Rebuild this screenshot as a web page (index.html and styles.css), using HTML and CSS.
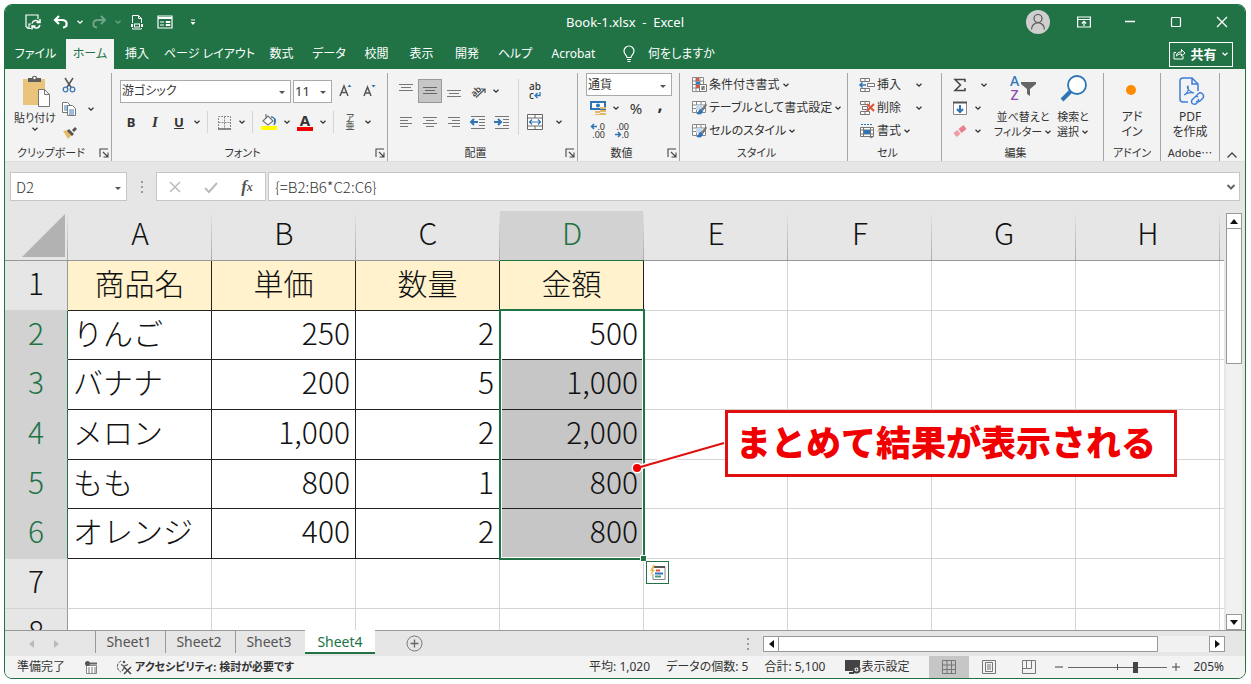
FILE: index.html
```html
<!DOCTYPE html>
<html lang="ja">
<head>
  <meta charset="UTF-8">
  <meta name="viewport" content="width=device-width, initial-scale=1">
  <title>Book-1.xlsx - Excel</title>
  <link rel="stylesheet" href="styles.css">
</head>
<body>

  <!-- 共通アイコン -->
  <svg class="defs" aria-hidden="true">
    <symbol id="chev" viewBox="0 0 8 8"><path d="M1.5 2.8 4 5.2 6.5 2.8" fill="none" stroke="currentColor" stroke-width="1.3"/></symbol>
    <symbol id="launch" viewBox="0 0 10 10"><path d="M1 9V1h8M4 4l4.500 4.500M9 4.500V9H4.500" fill="none" stroke="#444" stroke-width="1.1"/></symbol>
    <symbol id="tbl" viewBox="0 0 16 16"><path d="M1.500 1.500h13v11h-13zM1.500 5h13M1.500 8.500h13M5.500 1.500v11M10 1.500v11" fill="#fff" stroke="#888"/><path d="M5 5h6v5H5z" fill="#c5d9ee"/><path d="M15 3.500 10 9l2 2 4-6z" fill="#777"/><path d="M10 9c-3 0-2 4-5 4.500 3 2 7 1 7-2.500z" fill="#2f75b5"/></symbol>
  </svg>

  <div class="window">
    <header class="titlebar">
      <div class="quick">
        <button class="q" aria-label="上書き保存"><svg width="18" height="18" viewBox="0 0 18 18"><path d="M7 15.500H4l-2-2V2h12v4M5 15v-4h2" fill="none" stroke="#fff" stroke-width="1.200"/><path d="M8 10.500a4 4 0 0 1 7-1.500M16 6v3.500h-3.500M16 12a4 4 0 0 1-7 1.500M8 16.500V13h3.500" fill="none" stroke="#fff" stroke-width="1.500"/></svg></button>
        <button class="q" aria-label="元に戻す"><svg width="16" height="16" viewBox="0 0 16 16"><path d="M6 2 2 6l4 4M2.500 6H9c6 0 6 7 1 7.500" fill="none" stroke="#fff" stroke-width="2.200"/></svg></button>
        <button class="c" aria-label="元に戻す一覧"><svg width="8" height="8"><use href="#chev"/></svg></button>
        <button class="q faded" aria-label="やり直し"><svg width="16" height="16" viewBox="0 0 16 16"><path d="m10 2 4 4-4 4M13.500 6H7C1 6 1 13 6 13.500" fill="none" stroke="#fff" stroke-width="2"/></svg></button>
        <button class="c faded" aria-label="やり直し一覧"><svg width="8" height="8"><use href="#chev"/></svg></button>
        <button class="q" aria-label="印刷プレビュー"><svg width="16" height="16" viewBox="0 0 16 16"><path d="M3.500 9V1.500h6l3 3V9M9.500 1.500v3h3M3.500 14v1h9v-1" fill="none" stroke="#fff"/><path d="M2 11.500h2M12 11.500h2" stroke="#fff" stroke-width="3"/><rect x="5.500" y="10" width="5" height="3" fill="none" stroke="#fff"/></svg></button>
        <button class="q" aria-label="フォーム"><svg width="16" height="16" viewBox="0 0 16 16"><path d="M1 2h14v12H1z" fill="none" stroke="#fff" stroke-width="1.200"/><path d="M1 4h14" stroke="#fff" stroke-width="2"/><path d="M3 8h4M3 11h4M9 7.500h4v1H9zM9 10.500h4v1H9z" fill="none" stroke="#fff"/></svg></button>
        <button class="q" aria-label="カスタマイズ"><svg width="8" height="8" viewBox="0 0 8 8"><path d="M2 2h4" stroke="#fff"/><path d="M1.500 4h5L4 7z" fill="#fff"/></svg></button>
      </div>
      <div class="doc-title">Book-1.xlsx &nbsp;-&nbsp; Excel</div>
      <div class="window-buttons">
        <button class="avatar" aria-label="アカウント"><svg width="24" height="24" viewBox="0 0 24 24"><circle cx="12" cy="12" r="12" fill="#cfcfcf"/><circle cx="12" cy="8.500" r="4" fill="none" stroke="#555" stroke-width="1.200"/><path d="M5.500 19.500c0-9 13-9 13 0" fill="none" stroke="#555" stroke-width="1.200"/></svg></button>
        <button aria-label="リボンの表示オプション"><svg width="14" height="12" viewBox="0 0 14 12"><path d="M.600 1h12.800v10H.600zM.600 3.500h12.800M7 10V5.500M4.800 7.500 7 5.300l2.200 2.200" fill="none" stroke="#fff" stroke-width="1.200"/></svg></button>
        <button aria-label="最小化"><svg width="12" height="12"><path d="M1 5.500h10" stroke="#fff" stroke-width="1.300"/></svg></button>
        <button aria-label="最大化"><svg width="12" height="12"><rect x="1.500" y="1.500" width="9" height="9" rx="1" fill="none" stroke="#fff" stroke-width="1.200"/></svg></button>
        <button aria-label="閉じる"><svg width="12" height="12"><path d="m1 1 10 10M11 1 1 11" stroke="#fff" stroke-width="1.300"/></svg></button>
      </div>
    </header>

    <nav class="tabs">
      <div class="tab-list">
        <button>ファイル</button>
        <button class="active">ホーム</button>
        <button>挿入</button>
        <button>ページ レイアウト</button>
        <button>数式</button>
        <button>データ</button>
        <button>校閲</button>
        <button>表示</button>
        <button>開発</button>
        <button>ヘルプ</button>
        <button>Acrobat</button>
        <button class="tell"><svg width="14" height="18" viewBox="0 0 14 18"><path d="M5 12.500c0-2-3-3-3-6.500a5 5 0 0 1 10 0c0 3.500-3 4.500-3 6.500zM5 14.500h4M5.500 16.500h3" fill="none" stroke="#fff" stroke-width="1.200"/></svg>何をしますか</button>
      </div>
      <button class="share"><svg width="13" height="12" viewBox="0 0 13 12"><path d="M3 4.500H1v6.500h9V8M3.500 8c0-3 2-4 5-4V1.500L12 5 8.500 8V6C6 6 5 6.500 3.500 8z" fill="none" stroke="#fff"/></svg>共有<svg width="8" height="8"><use href="#chev"/></svg></button>
    </nav>

    <section class="ribbon">
      <div class="group clipboard">
        <div class="tools">
          <button class="big">
            <svg width="30" height="32" viewBox="0 0 30 32"><path d="M3 4h22v26H3z" fill="#ebc47c"/><path d="M8 3h4c0-3 5-3 5 0h4v4H8z" fill="#5d5d5d"/><circle cx="14.500" cy="3" r="1.200" fill="#fff"/><path d="M18.500 14.500h6l5 5v12h-11zM24.500 14.500v5h5" fill="#fff" stroke="#777"/></svg>
            貼り付け
            <svg width="8" height="8"><use href="#chev"/></svg>
          </button>
          <div class="rows">
            <button class="i" aria-label="切り取り"><svg width="14" height="16" viewBox="0 0 14 16"><path d="m3 1 6.500 10M11 1 4.500 11" stroke="#555" stroke-width="1.500"/><circle cx="3.500" cy="12.500" r="2.300" fill="none" stroke="#3e78b8" stroke-width="1.300"/><circle cx="10.500" cy="12.500" r="2.300" fill="none" stroke="#3e78b8" stroke-width="1.300"/></svg></button>
            <button class="i" aria-label="コピー"><svg width="16" height="16" viewBox="0 0 16 16"><path d="M1.500 1.500h5l3 3v7h-8z" fill="#fff" stroke="#777"/><path d="M3 5h4M3 7h3M3 9h3" stroke="#3e78b8"/><path d="M6.500 4.500h5l3 3v7h-8z" fill="#fff" stroke="#777"/><path d="M8 9h5M8 11h5M8 13h5" stroke="#3e78b8"/></svg></button>
            <button class="i" aria-label="書式のコピー"><svg width="15" height="14" viewBox="0 0 15 14"><path d="m1 5 5-1 4 5-4 4z" fill="#e8b865"/><path d="m7 3 5 5-2 2-5-5zM10 4l3-3 2 2-3 3z" fill="#555"/></svg></button>
          </div>
          <button class="c" aria-label="コピーの種類"><svg width="8" height="8"><use href="#chev"/></svg></button>
        </div>
        <div class="caption"><span>クリップボード</span><button aria-label="クリップボードの設定"><svg width="10" height="10"><use href="#launch"/></svg></button></div>
      </div>

      <div class="group font">
        <div class="tools two">
          <div class="line first">
            <span class="drop face"><select aria-label="フォント"><option>游ゴシック</option></select></span>
            <span class="drop size"><select aria-label="フォント サイズ"><option>11</option></select></span>
            <button class="i" aria-label="拡大"><svg width="14" height="16" viewBox="0 0 14 16"><path d="m1 13 4-10 4 10M2.500 9.500h5" fill="none" stroke="#555" stroke-width="1.500"/><path d="m8.500 4 2-2.500 2 2.500z" fill="#2f75b5"/></svg></button>
            <button class="i" aria-label="縮小"><svg width="14" height="16" viewBox="0 0 14 16"><path d="m1 13 3.500-9L8 13M2.500 10h4" fill="none" stroke="#555" stroke-width="1.500"/><path d="m8.500 2 2 2.500 2-2.500z" fill="#2f75b5"/></svg></button>
          </div>
          <div class="line">
            <button class="i b">B</button><button class="i it">I</button><button class="i u">U</button><button class="c" aria-label="下線の種類"><svg width="8" height="8"><use href="#chev"/></svg></button>
            <i class="bar"></i>
            <button class="i" aria-label="罫線"><svg width="15" height="15" viewBox="0 0 15 15"><path d="M1.500 14V1.500h12V14M7.500 1.500V14M1.500 7.500h12" fill="none" stroke="#888" stroke-dasharray="2 1"/><path d="M1 14h13" stroke="#666" stroke-width="1.500"/></svg></button><button class="c" aria-label="罫線の種類"><svg width="8" height="8"><use href="#chev"/></svg></button>
            <i class="bar"></i>
            <button class="i" aria-label="塗りつぶし"><svg width="18" height="18" viewBox="0 0 18 18"><path d="m3 8 5-5 5 5-5 4zM6 1v5" fill="#fff" stroke="#777" stroke-width="1.200"/><path d="M11 4c4 0 4 4 3 8 2-2 3-8-3-8z" fill="#2f75b5" stroke="#2f75b5"/><path d="M1 13h16v4H1z" fill="#ff0"/></svg></button><button class="c" aria-label="塗りつぶしの色"><svg width="8" height="8"><use href="#chev"/></svg></button>
            <button class="i color" aria-label="フォントの色">A</button><button class="c" aria-label="フォントの色一覧"><svg width="8" height="8"><use href="#chev"/></svg></button>
            <i class="bar"></i>
            <button class="i ruby"><span>ア</span><span>亜</span></button><button class="c" aria-label="ふりがな一覧"><svg width="8" height="8"><use href="#chev"/></svg></button>
          </div>
        </div>
        <div class="caption"><span>フォント</span><button aria-label="フォントの設定"><svg width="10" height="10"><use href="#launch"/></svg></button></div>
      </div>

      <div class="group align">
        <div class="tools">
          <div class="two">
            <div class="line">
              <button class="i" aria-label="上揃え"><svg width="16" height="16"><path d="M1 1.500h14M3 4.500h10M1 7.500h14" stroke="#777"/></svg></button>
              <button class="i on" aria-label="上下中央揃え"><svg width="16" height="16"><path d="M1 4.500h14M3 7.500h10M1 10.500h14" stroke="#666"/></svg></button>
              <button class="i" aria-label="下揃え"><svg width="16" height="16"><path d="M1 7.500h14M3 10.500h10M1 13.500h14" stroke="#777"/></svg></button>
              <button class="i" aria-label="方向"><svg width="17" height="16" viewBox="0 0 17 16"><text x="0" y="12" class="ab" transform="rotate(-45 5 8)">ab</text><path d="M6 14.500 15 6M11 6h4v4" fill="none" stroke="#555" stroke-width="1.200"/></svg></button><button class="c" aria-label="方向一覧"><svg width="8" height="8"><use href="#chev"/></svg></button>
            </div>
            <div class="line">
              <button class="i" aria-label="左揃え"><svg width="14" height="14"><path d="M1 2.500h12M1 5.500h8M1 8.500h12M1 11.500h8" stroke="#777"/></svg></button>
              <button class="i" aria-label="中央揃え"><svg width="14" height="14"><path d="M0 2.500h14M3 5.500h8M0 8.500h14M3 11.500h8" stroke="#777"/></svg></button>
              <button class="i" aria-label="右揃え"><svg width="14" height="14"><path d="M1 2.500h12M5 5.500h8M1 8.500h12M5 11.500h8" stroke="#777"/></svg></button>
              <button class="i" aria-label="インデントを減らす"><svg width="16" height="14"><path d="M1 1.500h14M9 4.500h6M9 7.500h6M9 10.500h6M1 13.500h14" stroke="#777"/><path d="M1 7h7M4 4 1 7l3 3" fill="none" stroke="#2f75b5" stroke-width="2"/></svg></button>
              <button class="i" aria-label="インデントを増やす"><svg width="16" height="14"><path d="M1 1.500h14M9 4.500h6M9 7.500h6M9 10.500h6M1 13.500h14" stroke="#777"/><path d="M0 7h7M4 4l3 3-3 3" fill="none" stroke="#2f75b5" stroke-width="2"/></svg></button>
            </div>
          </div>
          <i class="bar tall"></i>
          <div class="two">
            <div class="line"><button class="i wrap" aria-label="折り返して全体を表示"><span>ab</span><span>c<svg width="7" height="7" viewBox="0 0 7 7"><path d="M6 0v3.500H1M3.500 1 1 3.500 3.500 6" fill="none" stroke="#2f75b5" stroke-width="1.300"/></svg></span></button></div>
            <div class="line"><button class="i" aria-label="セルを結合して中央揃え"><svg width="16" height="16" viewBox="0 0 16 16"><path d="M.500.500h15v15H.500zM.500 4h15M.500 12h15M8 .500V4M8 12v3.500" fill="#fff" stroke="#666"/><path d="M2.500 8h11M5 5.500 2.500 8 5 10.500M11 5.500 13.500 8 11 10.500" fill="none" stroke="#2f75b5" stroke-width="1.200"/></svg></button><button class="c far" aria-label="結合一覧"><svg width="8" height="8"><use href="#chev"/></svg></button></div>
          </div>
        </div>
        <div class="caption"><span>配置</span><button aria-label="配置の設定"><svg width="10" height="10"><use href="#launch"/></svg></button></div>
      </div>

      <div class="group number">
        <div class="tools rows">
          <span class="drop format"><select aria-label="数値の書式"><option>通貨</option></select></span>
          <div class="line">
            <button class="i" aria-label="通貨表示形式"><svg width="17" height="16" viewBox="0 0 17 16"><path d="M1 2h14v7H1z" fill="#fff" stroke="#2f75b5" stroke-width="2"/><circle cx="8" cy="5.500" r="2" fill="#2f75b5"/><path d="M10 7h6v2h-6zM10 10h6v2h-6zM10 13h6v2h-6zM5 11h5v2H5zM5 14h5v1H5z" fill="#e6b765"/></svg></button><button class="c" aria-label="通貨一覧"><svg width="8" height="8"><use href="#chev"/></svg></button>
            <button class="i pct">%</button>
            <button class="i comma">,</button>
          </div>
          <div class="line">
            <button class="i dec" aria-label="小数点以下の表示桁数を増やす"><span><svg width="6" height="7" viewBox="0 0 6 7"><path d="M0 3.500h6M3 1 .500 3.500 3 6" fill="none" stroke="#2f75b5" stroke-width="1.500"/></svg>.0</span><span>.00</span></button>
            <button class="i dec" aria-label="小数点以下の表示桁数を減らす"><span>.00</span><span><svg width="6" height="7" viewBox="0 0 6 7"><path d="M0 3.500h6M3 1l2.500 2.500L3 6" fill="none" stroke="#2f75b5" stroke-width="1.500"/></svg>.0</span></button>
          </div>
        </div>
        <div class="caption"><span>数値</span><button aria-label="数値の設定"><svg width="10" height="10"><use href="#launch"/></svg></button></div>
      </div>

      <div class="group styles">
        <div class="tools rows">
          <button class="item"><svg width="16" height="16" viewBox="0 0 16 16"><path d="M1.500.500h11v14h-11zM1.500 4h11M1.500 7.500h11M1.500 11h11M5 .500v14M9 .500v14" fill="#fff" stroke="#888"/><path d="M5 1h3v3H5zM5 8h3v3H5z" fill="#e0533a"/><path d="M5 4.500h4v3H5z" fill="#3e78b8"/><path d="M8.500 7.500h7v7h-7z" fill="#fff" stroke="#777"/><path d="M10 10h4M10 12h4M13 9l-2 4" stroke="#555"/></svg>条件付き書式<svg class="v" width="8" height="8"><use href="#chev"/></svg></button>
          <button class="item"><svg width="16" height="16"><use href="#tbl"/></svg>テーブルとして書式設定<svg class="v" width="8" height="8"><use href="#chev"/></svg></button>
          <button class="item"><svg width="16" height="16"><use href="#tbl"/></svg>セルのスタイル<svg class="v" width="8" height="8"><use href="#chev"/></svg></button>
        </div>
        <div class="caption"><span>スタイル</span></div>
      </div>

      <div class="group cells">
        <div class="tools rows">
          <button class="item wide"><svg width="16" height="16" viewBox="0 0 16 16"><path d="M1.500 1.500h9v3h-9zM6 1.500v3M1.500 11.500h9v3h-9zM6 11.500v3M8.500 6.500h7v3h-7z" fill="#fff" stroke="#777"/><path d="M1 8h6M3.500 5.500 1 8l2.500 2.500" fill="none" stroke="#2f75b5" stroke-width="1.500"/></svg>挿入<svg class="v" width="8" height="8"><use href="#chev"/></svg></button>
          <button class="item wide"><svg width="16" height="16" viewBox="0 0 16 16"><path d="M1.500 1.500h9v3h-9zM6 1.500v3M3.500 6.500h5v3h-5zM1.500 11.500h9v3h-9zM6 11.500v3" fill="#fff" stroke="#777"/><path d="m8 4 7 7M15 4l-7 7" stroke="#e0533a" stroke-width="2"/></svg>削除<svg class="v" width="8" height="8"><use href="#chev"/></svg></button>
          <button class="item"><svg width="16" height="16" viewBox="0 0 16 16"><path d="M2 1.500h12" stroke="#2f75b5" stroke-dasharray="2 1"/><path d="M1.500 4.500h13v9h-13zM1.500 7h13M1.500 11h13M4.500 4.500v9M11.500 4.500v9" fill="#fff" stroke="#777"/><path d="M5 7h6v4H5z" fill="#2f75b5"/><path d="m10 13 2 2 3-2" fill="none" stroke="#777"/></svg>書式<svg class="v" width="8" height="8"><use href="#chev"/></svg></button>
        </div>
        <div class="caption"><span>セル</span></div>
      </div>

      <div class="group edit">
        <div class="tools">
          <div class="rows">
            <div class="line"><button class="i" aria-label="オート SUM"><svg width="14" height="14"><path d="M12 4V1.500H2L7.500 7 2 12.500h10V10" fill="none" stroke="#444" stroke-width="1.500"/></svg></button><button class="c far" aria-label="集計一覧"><svg width="8" height="8"><use href="#chev"/></svg></button></div>
            <div class="line"><button class="i" aria-label="フィル"><svg width="14" height="14"><path d="M.500 1.500h13v12H.500z" fill="#fff" stroke="#888"/><path d="M0 1.500h14" stroke="#555" stroke-width="2"/><path d="M7 4v7M4 8l3 3 3-3" fill="none" stroke="#2f75b5" stroke-width="2"/></svg></button><button class="c" aria-label="フィル一覧"><svg width="8" height="8"><use href="#chev"/></svg></button></div>
            <div class="line"><button class="i" aria-label="クリア"><svg width="14" height="14"><path d="m5.500 5 5-4 3 4-5 4z" fill="#e8818f"/><path d="m4.500 6 3 4-4 3-3-4z" fill="#ef9aa5"/></svg></button><button class="c" aria-label="クリア一覧"><svg width="8" height="8"><use href="#chev"/></svg></button></div>
          </div>
          <button class="big sort">
            <span class="pic"><span class="az"><span class="a">A</span><span class="z">Z</span></span><svg width="15" height="18" viewBox="0 0 15 18"><path d="M0 3h15v2l-6 5v7l-3-2v-5L0 5z" fill="#666"/></svg></span>
            並べ替えと<span>フィルター<svg width="8" height="8"><use href="#chev"/></svg></span>
          </button>
          <button class="big find">
            <svg width="30" height="30" viewBox="0 0 30 30"><circle cx="19" cy="12" r="9" fill="#fff" stroke="#2e75b6" stroke-width="1.800"/><path d="m13 18-9 9" stroke="#2e75b6" stroke-width="4"/></svg>
            検索と<span>選択<svg width="8" height="8"><use href="#chev"/></svg></span>
          </button>
        </div>
        <div class="caption"><span>編集</span></div>
      </div>

      <div class="group addin">
        <div class="tools"><button class="big"><svg width="30" height="30"><circle cx="14" cy="17" r="5" fill="#ff8c00"/></svg>アド<span>イン</span></button></div>
        <div class="caption"><span>アドイン</span></div>
      </div>

      <div class="group adobe">
        <div class="tools"><button class="big"><svg width="30" height="30" viewBox="0 0 30 30"><path d="M13 29H8c-2 0-3-1-3-3V8c0-2 1-3 3-3h9l6 6v7M17 5v6h6" fill="none" stroke="#3e7ddb" stroke-width="1.500"/><path d="M9 22c4-2 5-6 4-9-2 1 1 6 6 7-4-1-7 0-10 2z" fill="none" stroke="#3e7ddb" stroke-width="1.200"/><path d="m21 23 2-2c3-3 7 1 5 4l-3 3c-1 1-3 1-4 0M23 26c1 1 0 3-1 4-3 3-7 0-5-3l3-3c1-1 2-1 3 0" fill="none" stroke="#3e7ddb" stroke-width="1.400"/></svg>PDF<span>を作成</span></button></div>
        <div class="caption"><span>Adobe⋯</span></div>
      </div>
      <button class="collapse" aria-label="リボンを折りたたむ"><svg width="12" height="8"><path d="M1.500 6.500 6 2l4.500 4.500" fill="none" stroke="#444" stroke-width="1.300"/></svg></button>
    </section>

    <section class="formula-bar">
      <span class="drop name"><input type="text" value="D2" aria-label="名前ボックス"></span>
      <svg class="grip" width="4" height="14"><path d="M2 1v12" stroke="#999" stroke-width="2" stroke-dasharray="2 3"/></svg>
      <div class="fx">
        <button aria-label="キャンセル"><svg width="14" height="14"><path d="m2 2 10 10M12 2 2 12" stroke="#bbb" stroke-width="1.500"/></svg></button>
        <button aria-label="入力"><svg width="14" height="14"><path d="m1 8 4 4 8-9" fill="none" stroke="#bbb" stroke-width="2"/></svg></button>
        <button class="fn"><span>f</span><small>x</small></button>
      </div>
      <div class="formula"><input type="text" value="{=B2:B6*C2:C6}" aria-label="数式バー"><svg width="10" height="8"><path d="m1.500 2 3.500 3.500L8.500 2" fill="none" stroke="#666" stroke-width="2"/></svg></div>
    </section>

    <main class="sheet-area">
      <div class="pane">
        <table class="grid">
          <colgroup><col class="row-head"><col span="9"></colgroup>
          <thead>
            <tr><th class="corner"><svg width="43" height="43" viewBox="0 0 43 43"><path d="M43 0v43H0z" fill="#b2b2b2"/></svg></th><th>A</th><th>B</th><th>C</th><th class="sel">D</th><th>E</th><th>F</th><th>G</th><th>H</th><th></th></tr>
          </thead>
          <tbody>
            <tr class="heads"><th>1</th><td>商品名</td><td>単価</td><td>数量</td><td>金額</td><td></td><td></td><td></td><td></td><td></td></tr>
            <tr class="data short"><th>2</th><td>りんご</td><td>250</td><td>2</td><td>500</td><td></td><td></td><td></td><td></td><td></td></tr>
            <tr class="data picked"><th>3</th><td>バナナ</td><td>200</td><td>5</td><td>1,000</td><td></td><td></td><td></td><td></td><td></td></tr>
            <tr class="data picked"><th>4</th><td>メロン</td><td>1,000</td><td>2</td><td>2,000</td><td></td><td></td><td></td><td></td><td></td></tr>
            <tr class="data picked short"><th>5</th><td>もも</td><td>800</td><td>1</td><td>800</td><td></td><td></td><td></td><td></td><td></td></tr>
            <tr class="data picked"><th>6</th><td>オレンジ</td><td>400</td><td>2</td><td>800</td><td></td><td></td><td></td><td></td><td></td></tr>
            <tr><th>7</th><td></td><td></td><td></td><td></td><td></td><td></td><td></td><td></td><td></td></tr>
            <tr><th>8</th><td></td><td></td><td></td><td></td><td></td><td></td><td></td><td></td><td></td></tr>
          </tbody>
        </table>
        <div class="selection"></div>
        <button class="analysis" aria-label="クイック分析"><svg width="16" height="16" viewBox="0 0 16 16"><path d="M4 1.500h11v13H3V9" fill="#fff" stroke="#888"/><path d="M4 2h11" stroke="#555" stroke-width="2"/><path d="M6 5.500h4" stroke="#e0533a" stroke-width="2"/><path d="M5 8.500h8" stroke="#2f75b5" stroke-width="2"/><path d="M5 11.500h6" stroke="#4a9b7a" stroke-width="2"/><path d="M3 0 0 6h2L0 11l5-6H3l2-5z" fill="#f0b450"/></svg></button>
        <svg class="pointer" width="96" height="36" viewBox="0 0 96 36"><path d="M6 30 93 5" stroke="#fff" stroke-width="5"/><circle cx="6" cy="30" r="5.500" fill="#fff"/><path d="M6 30 93 5" stroke="#e01010" stroke-width="2"/><circle cx="6" cy="30" r="4" fill="#f00000"/></svg>
        <div class="callout">まとめて結果が表示される</div>
      </div>
      <div class="v-scroll">
        <button aria-label="上へ"><svg width="8" height="5"><path d="M0 5h8L4 0z" fill="#111"/></svg></button>
        <div class="thumb"></div>
        <div class="track"></div>
        <button aria-label="下へ"><svg width="8" height="5"><path d="M0 0h8L4 5z" fill="#111"/></svg></button>
      </div>
    </main>

    <section class="sheet-bar">
      <div class="sheet-nav">
        <button aria-label="前のシート"><svg width="5" height="8"><path d="M5 0v8L0 4z" fill="#bbb"/></svg></button>
        <button aria-label="次のシート"><svg width="5" height="8"><path d="M0 0v8l5-4z" fill="#bbb"/></svg></button>
      </div>
      <div class="sheet-tabs">
        <button>Sheet1</button><button>Sheet2</button><button>Sheet3</button><button class="active">Sheet4</button>
      </div>
      <button class="add" aria-label="新しいシート"><svg width="17" height="17"><circle cx="8.500" cy="8.500" r="7.500" fill="none" stroke="#777"/><path d="M4.500 8.500h8M8.500 4.500v8" stroke="#666" stroke-width="1.300"/></svg></button>
      <svg class="grip" width="4" height="14"><path d="M2 1v12" stroke="#999" stroke-width="2" stroke-dasharray="2 3"/></svg>
      <div class="h-scroll">
        <button aria-label="左へ"><svg width="5" height="8"><path d="M5 0v8L0 4z" fill="#111"/></svg></button>
        <div class="thumb"></div>
        <div class="track"></div>
        <button aria-label="右へ"><svg width="5" height="8"><path d="M0 0v8l5-4z" fill="#111"/></svg></button>
      </div>
    </section>

    <footer class="status">
      <span class="ready">準備完了</span>
      <svg width="13" height="13" viewBox="0 0 13 13"><path d="M1.500 4.500h10v8h-10z" fill="#fff" stroke="#888"/><path d="M5 2.500h7" stroke="#666" stroke-width="2"/><path d="M3 7h8M3 9h8M3 11h8" stroke="#777" stroke-dasharray="2 1"/><circle cx="2.500" cy="2.500" r="2.500" fill="#555"/></svg>
      <button class="access"><svg width="17" height="16" viewBox="0 0 17 16"><path d="M5 2a6 6 0 0 0 0 11" fill="none" stroke="#555" stroke-dasharray="3 1"/><circle cx="8" cy="3" r="1.300" fill="#555"/><path d="M5 5.500 8 7l4-1.500M8 7v2l-2 3" fill="none" stroke="#555" stroke-width="1.200"/><path d="m8 8 7 7M15 8l-7 7" stroke="#444" stroke-width="1.500"/></svg>アクセシビリティ: 検討が必要です</button>
      <div class="sums"><span>平均: 1,020</span><span>データの個数: 5</span><span>合計: 5,100</span></div>
      <button class="display"><svg width="16" height="14" viewBox="0 0 16 14"><path d="M0 0h15v6l-8 5H0zM4 12h5v2H4z" fill="#444"/><circle cx="11.500" cy="9.500" r="3" fill="#fff" stroke="#444" stroke-width="2"/><circle cx="11.500" cy="9.500" r="1" fill="#444"/></svg>表示設定</button>
      <div class="views">
        <button class="on" aria-label="標準"><svg width="14" height="14"><path d="M.500.500h13v13H.500zM.500 5h13M.500 9.500h13M5 .500v13M9.500.500v13" fill="none" stroke="#777"/></svg></button>
        <button aria-label="ページ レイアウト表示"><svg width="14" height="14"><path d="M.500.500h13v13H.500zM3.500 2.500h7v9h-7zM5 5h4M5 7h4M5 9h4" fill="none" stroke="#777"/></svg></button>
        <button aria-label="改ページ プレビュー"><svg width="14" height="14"><path d="M.500.500h13v13H.500zM4.500.500v8h5v-8M.500 8.500h4" fill="none" stroke="#777"/></svg></button>
      </div>
      <div class="zoom">
        <button aria-label="縮小表示"><svg width="8" height="8"><path d="M0 4h8" stroke="#444"/></svg></button>
        <input type="range" min="0" max="100" value="69" aria-label="ズーム">
        <button aria-label="拡大表示"><svg width="8" height="8"><path d="M0 4h8M4 0v8" stroke="#444"/></svg></button>
        <span>205%</span>
      </div>
    </footer>
  </div>

</body>
</html>
```
FILE: styles.css
```css
* {
  box-sizing: border-box;
}

body {
  margin: 0;
  padding: 4px 5px 5px 4px;
  background: #fff;
  color: #333;
  font-family: "Noto Sans", "Noto Sans CJK JP", sans-serif;
  font-size: 12px;
  line-height: 16px;
  font-feature-settings: "palt";
}

button,
input,
select {
  margin: 0;
  padding: 0;
  border: none;
  background: none;
  color: inherit;
  font: inherit;
  font-feature-settings: inherit;
}

button {
  display: flex;
  align-items: center;
  justify-content: center;
  white-space: nowrap;
}

svg {
  display: block;
  flex: none;
  overflow: visible;
}

.defs {
  position: absolute;
  width: 0;
  height: 0;
  overflow: hidden;
}

.window {
  display: flex;
  flex-direction: column;
  height: calc(100vh - 9px);
  border: 1px solid #217346;
  border-radius: 8px;
  overflow: hidden;
  background: #e6e6e6;
}

/* タイトルバー */
.titlebar {
  display: grid;
  grid-template-columns: 1fr auto 1fr;
  align-items: center;
  height: 34px;
  background: #217346;
  color: #fff;
}

.doc-title {
  font-size: 13px;
}

.quick {
  display: flex;
  align-items: center;
  padding-left: 14px;
}

.quick .q {
  width: 28px;
  height: 28px;
}

.quick .c {
  width: 10px;
}

.faded {
  opacity: .35;
}

.window-buttons {
  display: flex;
  justify-content: flex-end;
}

.window-buttons button {
  width: 46px;
  height: 32px;
}

/* タブ */
.tabs {
  display: flex;
  justify-content: space-between;
  align-items: center;
  height: 30px;
  padding-right: 12px;
  background: #217346;
  color: #fff;
}

.tab-list {
  display: grid;
  grid-template-columns: 61px 48px 46px 99px 45px 50px 45px 45px 46px 50px 67px auto;
  height: 30px;
}

.tab-list .active {
  background: #f3f3f3;
  color: #217346;
}

.tab-list .tell {
  gap: 12px;
  padding-left: 15px;
}

.share {
  gap: 4px;
  width: 64px;
  height: 25px;
  border: 1px solid #fff;
  font-size: 13px;
  font-weight: bold;
}

/* リボン */
.ribbon {
  display: flex;
  height: 93px;
  background: #f3f3f3;
  border-bottom: 1px solid #ddd;
}

.group {
  display: flex;
  flex-direction: column;
  flex: none;
  margin-top: 4px;
  border-right: 1px solid #a6a6a6;
}

.clipboard { width: 107px; }
.font { width: 276px; }
.align { width: 190px; }
.number { width: 102px; }
.styles { width: 168px; }
.cells { width: 94px; }
.edit { width: 162px; }
.addin { width: 57px; }
.adobe { width: 59px; }

.tools {
  display: flex;
  height: 72px;
}

.rows {
  display: flex;
  flex-direction: column;
}

.rows > * {
  height: 23px;
}

.two {
  display: flex;
  flex-direction: column;
  gap: 7px;
  padding-top: 6px;
}

.line {
  display: flex;
  align-items: center;
}

.two .line {
  height: 24px;
}

.i {
  width: 24px;
  height: 24px;
  flex: none;
}

.c {
  width: 12px;
  flex: none;
}

.far {
  margin-left: 6px;
}

.bar {
  width: 1px;
  height: 22px;
  margin: 0 4px;
  background: #d5d5d5;
}

.tall {
  height: 56px;
  margin: 6px 4px 0;
}

.caption {
  display: grid;
  grid-template-columns: 0 1fr 14px;
  align-items: center;
  height: 16px;
  font-size: 11px;
  white-space: nowrap;
}

.caption span {
  grid-column: 2;
  text-align: center;
}

.addin .caption,
.adobe .caption {
  display: block;
  text-align: center;
}

.big {
  flex-direction: column;
  justify-content: flex-start;
  line-height: 15px;
}

.big > svg:first-child,
.pic {
  margin-bottom: 6px;
}

.big span {
  display: flex;
  align-items: center;
  gap: 2px;
}

.clipboard .tools {
  padding-left: 8px;
}

.clipboard .big {
  width: 44px;
  padding-top: 2px;
  font-size: 11px;
}

.clipboard .big > svg:first-child {
  margin-bottom: 3px;
}

.clipboard .c {
  align-self: center;
  margin-left: 4px;
}

.font .tools {
  padding-left: 7px;
}

.first {
  padding-left: 1px;
}

.first .drop {
  margin-right: 2px;
}

.drop {
  position: relative;
  display: block;
  border: 1px solid #aaa;
  background: #fff;
}

.drop::after {
  content: "";
  position: absolute;
  right: 5px;
  top: 50%;
  border: 3px solid transparent;
  border-top-color: #555;
  border-bottom: none;
}

.drop select,
.drop input {
  display: block;
  width: 100%;
  height: 100%;
  padding-left: 1px;
  appearance: none;
  outline: none;
}

.face {
  width: 171px;
  height: 23px;
}

.size {
  width: 39px;
  height: 23px;
}

.size select {
  font-size: 13px;
}

.b {
  font-size: 13px;
  font-weight: bold;
}

.it {
  font-family: "Liberation Serif", serif;
  font-size: 15px;
  font-style: italic;
  font-weight: bold;
}

.u {
  font-size: 13px;
  font-weight: bold;
  text-decoration: underline;
}

.i.color {
  width: 16px;
  height: 18px;
  margin: 0 4px;
  border-bottom: 4px solid #f00000;
  font-size: 15px;
  font-weight: bold;
}

.ruby {
  flex-direction: column;
  font-size: 9px;
  line-height: 8px;
}

.align .tools {
  padding-left: 6px;
}

.on {
  background: #c6c6c6;
}

.align .on {
  border: 1px solid #999;
}

.ab {
  font-size: 9px;
  font-weight: 600;
  fill: #444;
}

.wrap {
  flex-direction: column;
  font-size: 10px;
  font-weight: 500;
  line-height: 9px;
}

.dec {
  flex-direction: column;
  align-items: flex-end;
  padding-right: 5px;
  font-size: 9px;
  line-height: 8px;
}

.wrap span,
.dec span {
  display: flex;
  align-items: center;
}

.number .tools {
  padding-left: 8px;
}

.format {
  width: 86px;
  flex: none;
}

.pct {
  margin-left: 2px;
  font-size: 15px;
}

.comma {
  padding-bottom: 8px;
  font-size: 18px;
  font-weight: bold;
}

.styles .tools,
.cells .tools {
  padding-left: 11px;
}

.item {
  justify-content: flex-start;
  gap: 2px;
}

.wide .v {
  margin-left: 12px;
}

.edit .tools {
  padding-left: 6px;
}

.edit .big {
  width: 50px;
  font-size: 11px;
}

.edit .rows {
  width: 50px;
}

.addin .big,
.adobe .big {
  width: 100%;
}

.pic {
  height: 30px;
}

.az {
  flex-direction: column;
  font-size: 14px;
  font-weight: 500;
  line-height: 14px;
}

.big .az {
  gap: 0;
}

.a {
  color: #2e75b6;
}

.z {
  color: #8e4bb0;
}

.collapse {
  align-self: flex-end;
  width: 24px;
  height: 12px;
}

/* 数式バー */
.formula-bar {
  display: flex;
  align-items: center;
  height: 49px;
  padding: 0 5px;
  font-family: "Noto Sans CJK JP", sans-serif;
  font-size: 15px;
  font-weight: 300;
}

.name {
  width: 117px;
  height: 29px;
  border-color: #c6c6c6;
}

.name input {
  padding-left: 5px;
}

.formula-bar .grip {
  margin: 0 12px 0 13px;
}

.fx {
  display: flex;
  justify-content: space-around;
  width: 110px;
  height: 29px;
  margin-right: 2px;
  border: 1px solid #c6c6c6;
  background: #fff;
}

.fx button {
  width: 30px;
}

.fn {
  color: #555;
  font-family: "Liberation Serif", serif;
  font-size: 17px;
  font-style: italic;
  font-weight: bold;
}

.fn small {
  font-size: 12px;
}

.formula {
  display: flex;
  align-items: center;
  flex: 1;
  height: 29px;
  padding: 0 3px 0 6px;
  border: 1px solid #c6c6c6;
  background: #fff;
}

.formula input {
  flex: 1;
  outline: none;
}

/* シート */
.sheet-area {
  display: flex;
  flex: 1;
  min-height: 0;
}

.pane {
  position: relative;
  flex: 1;
  min-width: 0;
  overflow: hidden;
  font-family: "Noto Sans CJK JP", sans-serif;
  font-size: 30px;
  font-weight: 300;
  font-feature-settings: normal;
  line-height: 40px;
  color: #111;
}

.grid {
  width: 1359px;
  table-layout: fixed;
  border-collapse: separate;
  border-spacing: 0;
}

.grid col {
  width: 144px;
}

.grid .row-head {
  width: 63px;
}

.grid tr {
  height: 50px;
}

.grid .short {
  height: 49px;
}

.grid th,
.grid td {
  padding: 0 5px 7px;
  border-right: 1px solid #d4d4d4;
  border-bottom: 1px solid #d4d4d4;
  font-weight: 300;
  white-space: nowrap;
}

.grid td {
  background: #fff;
}

.grid th {
  background: #e6e6e6;
}

.grid thead th {
  border-right: none;
  border-bottom-color: #999;
  background: linear-gradient(#e6e6e6, #aaa) right / 1px 100% no-repeat #e6e6e6;
}

.grid thead .sel {
  background-color: #d2d2d2;
  border-bottom-color: #217346;
  color: #217346;
}

.grid .corner {
  padding: 0 3px 3px 0;
  vertical-align: bottom;
}

.corner svg {
  margin-left: auto;
}

.grid tbody th {
  border-right-color: #999;
}

.grid .data th {
  background: #d2d2d2;
  border-right: 1px solid #217346;
  color: #217346;
}

.heads td:nth-child(-n+5),
.data td:nth-child(-n+5) {
  border-color: #222;
}

.heads td:nth-child(-n+5) {
  background: #fff2cc;
  text-align: center;
}

.data td:nth-child(n+3) {
  text-align: right;
}

.picked td:nth-child(5) {
  background: #c6c6c6;
}

.selection {
  position: absolute;
  left: 494px;
  top: 98px;
  width: 146px;
  height: 251px;
  border: 2px solid #217346;
  box-shadow: inset 0 0 0 1px #fff;
}

.selection::after {
  content: "";
  position: absolute;
  right: -3px;
  bottom: -3px;
  width: 5px;
  height: 5px;
  background: #217346;
  outline: 1px solid #fff;
}

.analysis {
  position: absolute;
  left: 641px;
  top: 350px;
  width: 23px;
  height: 23px;
  border: 1px solid #217346;
  background: #fff;
}

.pointer {
  position: absolute;
  left: 626px;
  top: 227px;
}

.callout {
  position: absolute;
  left: 720px;
  top: 199px;
  width: 452px;
  padding: 8px 8px 13px;
  border: 3px solid #e01010;
  background: #fff;
  color: #f00000;
  font-size: 35px;
  font-weight: 900;
  white-space: nowrap;
}

.v-scroll {
  display: flex;
  flex-direction: column;
  width: 21px;
  padding: 2px 3px 0 2px;
}

.v-scroll button,
.h-scroll button {
  width: 16px;
  height: 16px;
  flex: none;
  border: 1px solid #999;
  background: #fff;
}

.thumb {
  border: 1px solid #999;
  background: #fff;
}

.track {
  flex: 1;
  background: #f1f1f1;
}

.v-scroll .thumb {
  height: 135px;
  border-top: none;
}

/* シート見出し */
.sheet-bar {
  display: flex;
  align-items: center;
  height: 26px;
  border-top: 1px solid #999;
  font-size: 14px;
}

.sheet-nav {
  display: flex;
  gap: 20px;
  width: 90px;
  padding-left: 24px;
}

.sheet-tabs {
  display: flex;
  align-self: flex-start;
}

.sheet-tabs button {
  width: 70px;
  height: 22px;
  padding-right: 3px;
  border-left: 1px solid #999;
  color: #555;
}

.sheet-tabs .active {
  height: 24px;
  margin-top: -1px;
  padding: 1px 0 0;
  border-left: none;
  border-bottom: 2px solid #217346;
  background: #fff;
  color: #217346;
}

.add {
  margin-left: 31px;
}

.sheet-bar .grip {
  margin: 0 13px 0 auto;
}

.h-scroll {
  display: flex;
  width: 462px;
  margin-right: 20px;
}

.h-scroll .thumb {
  width: 82%;
  border-left: none;
}

/* ステータスバー */
.status {
  display: flex;
  align-items: center;
  height: 22px;
  padding: 0 21px 0 12px;
  background: #f3f3f3;
}

.ready {
  margin-right: 20px;
}

.access {
  gap: 2px;
  margin-left: 18px;
  font-size: 11px;
  font-weight: bold;
}

.sums {
  display: flex;
  gap: 16px;
  margin-left: auto;
}

.display {
  margin: 0 20px;
}

.views {
  display: flex;
}

.views button {
  width: 40px;
  height: 22px;
}

.zoom {
  display: flex;
  align-items: center;
  margin-left: 6px;
}

.zoom input {
  width: 99px;
  height: 16px;
  margin: 0 5px;
  appearance: none;
  background: linear-gradient(#555, #555) center / 1px 6px no-repeat, linear-gradient(#666, #666) center / 100% 1px no-repeat;
}

.zoom input::-webkit-slider-thumb {
  appearance: none;
  width: 5px;
  height: 11px;
  background: #444;
}

.zoom span {
  margin-left: 13px;
}
```
